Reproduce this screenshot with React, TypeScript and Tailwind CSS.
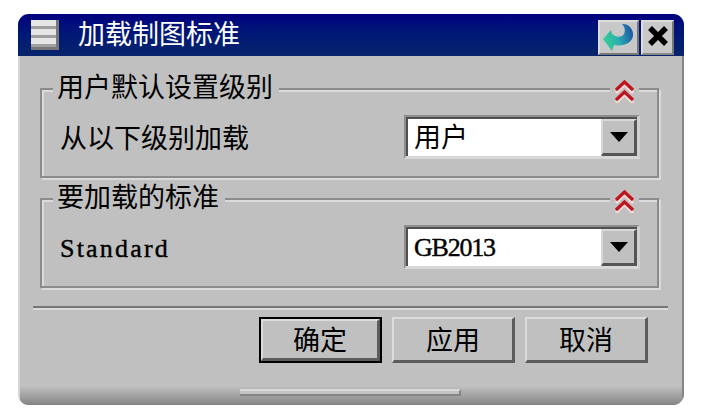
import { useState } from "react";
import type { ReactNode } from "react";
import clsx from "clsx";

const CollapseIcon = () => (
  <svg width="29" height="24" viewBox="0 0 29 24" fill="none">
    <path d="M6 14 L14.5 5.5 L23 14 M6 24 L14.5 15.5 L23 24" stroke="#fbdcd8" strokeWidth="3" />
    <path d="M6 11 L14.5 3 L23 11 M6 21 L14.5 13 L23 21" stroke="#bd1620" strokeWidth="3.2" />
  </svg>
);

const ResetIcon = () => (
  <svg width="33" height="30" viewBox="0 0 33 30">
    <defs>
      <linearGradient id="reset" x1="0" y1="0.6" x2="1" y2="0.3">
        <stop offset="0" stopColor="#35d092" />
        <stop offset="0.45" stopColor="#2bb0b0" />
        <stop offset="1" stopColor="#1c55a6" />
      </linearGradient>
    </defs>
    <path
      d="M1 17 L9 8 L10 12 C13 15 20 16 22 12 C24 8 22 4 20 2 C26 1 32 7 31 14 C30 21 21 25 12 23 L10 29 Z"
      fill="url(#reset)"
    />
  </svg>
);

interface GroupProps {
  title: string;
  children: ReactNode;
}

const Group = ({ title, children }: GroupProps) => (
  <section className="h-[90px] w-[619px] border-2 border-[#8b8b8b] shadow-[2px_2px_0_#dadada,inset_2px_2px_0_#dadada]">
    <header className="-mt-[16px] ml-[11px] mr-[18px] flex h-[28px] items-center justify-between">
      <h2 className="-mt-[5px] bg-[#c0c0c0] pl-1 pr-1.5 leading-[28px]">{title}</h2>
      <button className="mt-[5px] bg-[#c0c0c0]">
        <CollapseIcon />
      </button>
    </header>
    <div className="ml-[18px] mr-[17px] mt-[13px] flex h-[44px] items-center justify-between">
      {children}
    </div>
  </section>
);

interface ComboProps {
  value: string;
  latin?: boolean;
}

const Combo = ({ value, latin }: ComboProps) => (
  <div className="flex h-[44px] w-[236px] border-b-[3px] border-l-2 border-r-[3px] border-t-2 border-b-[#d8d8d8] border-l-[#8d8d8d] border-r-[#d0d0d0] border-t-[#8d8d8d]">
    <div className="flex w-full border-l-2 border-t-2 border-[#505050] bg-white">
      <span
        className={clsx(
          "flex-1 pl-[6px]",
          latin
            ? "font-['Liberation_Serif',serif] text-[26px] leading-[37px] tracking-[-1.2px] [-webkit-text-stroke:0.4px_black]"
            : "leading-[33px]",
        )}
      >
        {value}
      </span>
      <button className="flex w-[36px] items-center justify-center border-b-[3px] border-l-2 border-r-[3px] border-t-2 border-b-[#555] border-l-[#d8d8d8] border-r-[#555] border-t-[#d8d8d8] bg-[#c0c0c0]">
        <svg width="18" height="10" viewBox="0 0 18 10">
          <path d="M0 0 H18 L9 10 Z" fill="#000" />
        </svg>
      </button>
    </div>
  </div>
);

interface DialogButtonProps {
  label: string;
  primary?: boolean;
}

const DialogButton = ({ label, primary }: DialogButtonProps) => (
  <button
    className={clsx(
      "h-[46px] w-[123px]",
      primary && "border-2 border-black",
    )}
  >
    <span className="flex h-full items-center justify-center border-b-[3px] border-l-2 border-r-[3px] border-t-2 border-b-[#5c5c5c] border-l-[#dcdcdc] border-r-[#5c5c5c] border-t-[#dcdcdc]">
      {label}
    </span>
  </button>
);

const App = () => {
  const [level] = useState("用户");
  const [standard] = useState("GB2013");

  return (
    <div className="h-[414px] w-[703px] bg-white pl-[18px] pt-[14px] font-['Noto_Sans_CJK_SC',sans-serif] text-[27px] text-black">
      <div className="flex h-[391px] w-[666px] flex-col overflow-hidden rounded-[11px] bg-[#c0c0c0]">
        <header className="flex h-[42px] shrink-0 items-center bg-linear-to-b from-[#000080] to-[#08246b] pl-[13px] pr-[10px]">
          <div className="flex h-[30px] w-[28px] flex-col gap-[3px] border-b-[3px] border-r-[3px] border-[#777] bg-[#a0a0a0]">
            <span className="h-[6px] bg-[#e6e6e6]" />
            <span className="h-[6px] bg-[#e6e6e6]" />
            <span className="h-[6px] bg-[#e6e6e6]" />
          </div>
          <h1 className="-mt-1 ml-[19px] flex-1 leading-[38px] text-white">加载制图标准</h1>
          <button className="mt-[4px] flex h-[35px] w-[41px] items-center justify-center border-2 border-b-[#777] border-l-[#ddd] border-r-[#777] border-t-[#ddd] bg-[#c8c8c8]">
            <ResetIcon />
          </button>
          <button className="ml-[2px] mt-[4px] flex h-[35px] w-[33px] items-center justify-center border-2 border-b-[#888] border-l-[#ddd] border-r-[#777] border-t-[#ddd] bg-[#c8c8c8]">
            <svg width="20" height="20" viewBox="0 0 20 20" className="-mt-[2px]">
              <path d="M2 2 L18 18 M18 2 L2 18" stroke="#000" strokeWidth="5.5" />
            </svg>
          </button>
        </header>

        <main className="flex flex-1 flex-col border-l-2 border-r-2 border-l-[#d6d6d6] border-r-[#858585]">
          <div className="ml-5 mt-[32px] flex flex-col gap-[20px]">
            <Group title="用户默认设置级别">
              <span className="leading-[44px]">从以下级别加载</span>
              <Combo value={level} />
            </Group>
            <Group title="要加载的标准">
              <span className="mt-[3px] font-['Liberation_Serif',serif] text-[26px] leading-[44px] tracking-[2.2px] [-webkit-text-stroke:0.4px_black]">
                Standard
              </span>
              <Combo value={standard} latin />
            </Group>
          </div>
          <hr className="ml-[13px] mt-[18px] h-[4px] w-[635px] border-b-2 border-t-2 border-b-[#dadada] border-t-[#777]" />
          <div className="ml-[239px] mt-[7px] flex gap-[10px]">
            <DialogButton label="确定" primary />
            <DialogButton label="应用" />
            <DialogButton label="取消" />
          </div>
          <div className="mt-auto flex h-[19px] justify-center border-b border-[#808080] bg-linear-to-b from-[#c0c0c0] to-[#888]">
            <div className="mr-[1px] mt-[3px] h-[7px] w-[221px] border-b-2 border-r-2 border-t-2 border-b-[#858585] border-r-[#858585] border-t-[#d8d8d8] bg-[#c4c4c4]" />
          </div>
        </main>
      </div>
    </div>
  );
};

export default App;
